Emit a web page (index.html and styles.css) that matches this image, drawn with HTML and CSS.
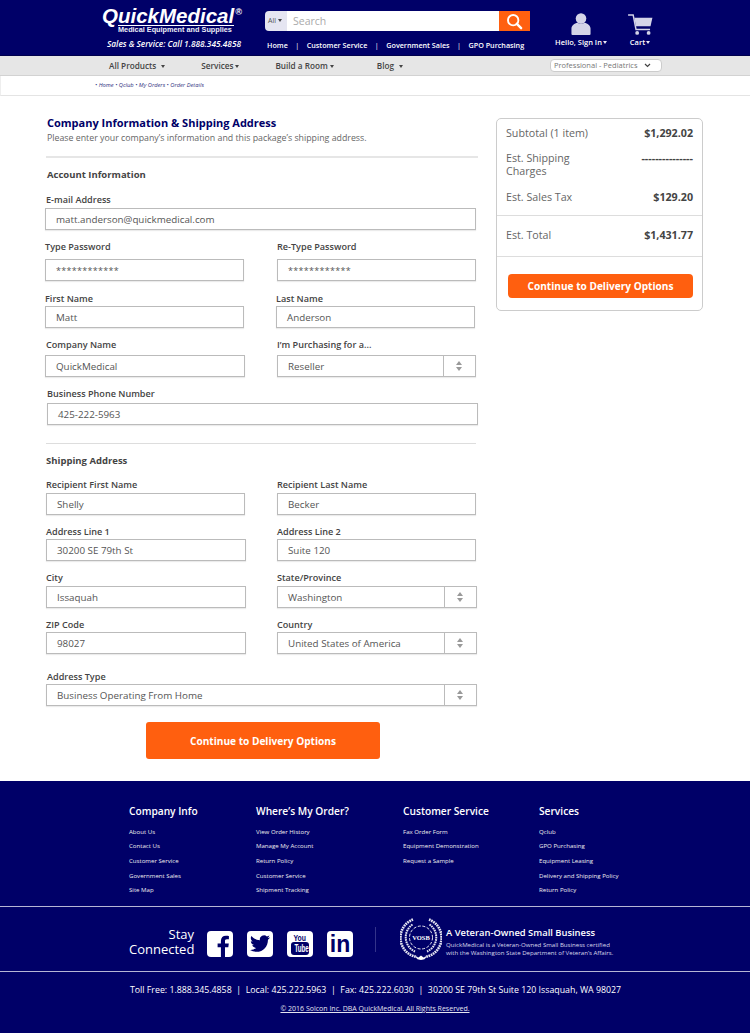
FILE: index.html
```html
<!DOCTYPE html>
<html lang="en">
<head>
<meta charset="utf-8">
<title>QuickMedical - Company Information</title>
<link rel="stylesheet" href="styles.css">
</head>
<body>
<header class="top">
  <div class="brand">
    <div class="logo"><span class="logo-name">QuickMedical</span><span class="logo-reg">®</span></div>
    <div class="logo-sub">Medical Equipment and Supplies</div>
    <div class="sales">Sales &amp; Service: Call 1.888.345.4858</div>
  </div>
  <div class="search-col">
    <div class="search">
      <div class="search-all">All<span class="caret-dark"></span></div>
      <div class="search-input">Search</div>
      <div class="search-btn">
        <svg width="17" height="17" viewBox="0 0 18 18"><circle cx="7.600" cy="7.600" r="5.500" fill="none" stroke="#fff" stroke-width="2"/><path d="M11.500 11.500 16 16" stroke="#fff" stroke-width="2.600" stroke-linecap="round"/></svg>
      </div>
    </div>
    <nav class="toplinks">
      <span>Home</span><i>|</i><span>Customer Service</span><i>|</i><span>Government Sales</span><i>|</i><span>GPO Purchasing</span>
    </nav>
  </div>
  <div class="account">
    <svg width="20" height="22" viewBox="0 0 22 24"><circle cx="11" cy="6" r="5.800" fill="#d4d4e8"/><path d="M0.500 23v-6c0-3.500 3.500-6 6.500-6.500 2.500 1.300 5.500 1.300 8 0 3 .5 6.500 3 6.500 6.500v6c0 .6-.4 1-1 1H1.500c-.6 0-1-.4-1-1z" fill="#d4d4e8"/></svg>
    <div class="acct-label">Hello, Sign In<span class="caret"></span></div>
  </div>
  <div class="cart">
    <svg width="25" height="21" viewBox="0 0 26 22"><path d="M0 1h5.300l3 15.200H23" fill="none" stroke="#d4d4e8" stroke-width="1.500"/><path d="M6.500 4H25.500l-2 8.800H8.200z" fill="#d4d4e8"/><circle cx="9.500" cy="19.800" r="2" fill="#d4d4e8"/><circle cx="21.500" cy="19.800" r="2" fill="#d4d4e8"/></svg>
    <div class="acct-label">Cart<span class="caret"></span></div>
  </div>
</header>

<nav class="mainnav">
  <span class="nav-a">All Products<span class="caret-dark wide"></span></span>
  <span class="nav-b">Services<span class="caret-dark"></span></span>
  <span class="nav-c">Build a Room<span class="caret-dark"></span></span>
  <span class="nav-d">Blog<span class="caret-dark wide"></span></span>
  <div class="pro-select">Professional - Pediatrics
    <svg width="7" height="5" viewBox="0 0 7 5"><path d="M1 1l2.500 2.500L6 1" fill="none" stroke="#444" stroke-width="1.200"/></svg>
  </div>
</nav>

<div class="crumbs">• Home • Qclub • My Orders • Order Details</div>

<main class="page">
  <form class="form">
    <h1>Company Information &amp; Shipping Address</h1>
    <p class="intro">Please enter your company’s information and this package’s shipping address.</p>
    <div class="rule rule-a"></div>
    <h2 class="h-account">Account Information</h2>

    <div class="field f-email"><label>E-mail Address</label><div class="input">matt.anderson@quickmedical.com</div></div>

    <div class="row r-pass">
      <div class="field"><label>Type Password</label><div class="input stars">************</div></div>
      <div class="field"><label>Re-Type Password</label><div class="input stars">************</div></div>
    </div>
    <div class="row r-name">
      <div class="field"><label>First Name</label><div class="input">Matt</div></div>
      <div class="field"><label>Last Name</label><div class="input">Anderson</div></div>
    </div>
    <div class="row r-company">
      <div class="field"><label>Company Name</label><div class="input">QuickMedical</div></div>
      <div class="field"><label>I’m Purchasing for a...</label><div class="input select">Reseller<span class="updown"></span></div></div>
    </div>
    <div class="field f-phone"><label>Business Phone Number</label><div class="input">425-222-5963</div></div>

    <div class="rule rule-b"></div>
    <h2 class="h-ship">Shipping Address</h2>

    <div class="row r-recip">
      <div class="field"><label>Recipient First Name</label><div class="input">Shelly</div></div>
      <div class="field"><label>Recipient Last Name</label><div class="input">Becker</div></div>
    </div>
    <div class="row r-addr">
      <div class="field"><label>Address Line 1</label><div class="input">30200 SE 79th St</div></div>
      <div class="field"><label>Address Line 2</label><div class="input">Suite 120</div></div>
    </div>
    <div class="row r-city">
      <div class="field"><label>City</label><div class="input">Issaquah</div></div>
      <div class="field"><label>State/Province</label><div class="input select">Washington<span class="updown"></span></div></div>
    </div>
    <div class="row r-zip">
      <div class="field"><label>ZIP Code</label><div class="input">98027</div></div>
      <div class="field"><label>Country</label><div class="input select">United States of America<span class="updown"></span></div></div>
    </div>
    <div class="field f-type"><label>Address Type</label><div class="input select">Business Operating From Home<span class="updown"></span></div></div>

    <button class="cta" type="button">Continue to Delivery Options</button>
  </form>

  <aside class="summary">
    <div class="sum-group">
      <div class="sum-row"><span>Subtotal (1 item)</span><b>$1,292.02</b></div>
      <div class="sum-row ship"><span>Est. Shipping<br>Charges</span><b>---------------</b></div>
      <div class="sum-row"><span>Est. Sales Tax</span><b>$129.20</b></div>
    </div>
    <div class="sum-total">
      <div class="sum-row"><span>Est. Total</span><b>$1,431.77</b></div>
    </div>
    <div class="sum-action"><button class="cta cta-small" type="button">Continue to Delivery Options</button></div>
  </aside>
</main>

<footer class="foot">
  <div class="foot-cols">
    <div class="col c1"><h3>Company Info</h3><a>About Us</a><a>Contact Us</a><a>Customer Service</a><a>Government Sales</a><a>Site Map</a></div>
    <div class="col c2"><h3>Where’s My Order?</h3><a>View Order History</a><a>Manage My Account</a><a>Return Policy</a><a>Customer Service</a><a>Shipment Tracking</a></div>
    <div class="col c3"><h3>Customer Service</h3><a>Fax Order Form</a><a>Equipment Demonstration</a><a>Request a Sample</a></div>
    <div class="col c4"><h3>Services</h3><a>Qclub</a><a>GPO Purchasing</a><a>Equipment Leasing</a><a>Delivery and Shipping Policy</a><a>Return Policy</a></div>
  </div>
  <div class="foot-mid">
    <div class="stay">Stay<br>Connected</div>
    <div class="social">
      <div class="soc"><svg width="26" height="26" viewBox="0 0 26 26"><path fill="#000068" d="M18 26V16.300h3.300l.5-3.800H18v-2.400c0-1.100.3-1.800 1.900-1.800h2V4.900c-.4 0-1.600-.2-3-.2-3 0-5 1.800-5 5.100v2.700h-3.300v3.800h3.300V26z"/></svg></div>
      <div class="soc"><svg width="20" height="17" viewBox="0 0 24 20"><path fill="#000068" d="M24 2.400c-.9.400-1.800.7-2.800.8 1-.6 1.800-1.600 2.200-2.700-1 .6-2 1-3.100 1.200A4.900 4.900 0 0 0 11.900 6.100C7.800 5.900 4.200 3.900 1.700.9.300 3.200 1 6.100 3.200 7.500c-.8 0-1.600-.2-2.200-.6 0 2.400 1.700 4.400 3.900 4.900-.7.200-1.500.2-2.200.1.600 2 2.400 3.400 4.600 3.400A9.900 9.900 0 0 1 0 17.800 14 14 0 0 0 7.500 20c9.100 0 14.300-7.700 14-14.600 1-.7 1.800-1.600 2.500-3z"/></svg></div>
      <div class="soc yt"><span class="yt-you">You</span><span class="yt-tube"><span class="yt-tube-text">Tube</span></span></div>
      <div class="soc"><span class="in">in</span></div>
    </div>
    <div class="vline"></div>
    <svg class="seal" width="42" height="42" viewBox="0 0 42 42">
      <g fill="none" stroke="#e6e6f2" stroke-dasharray="1.700 .7">
        <path stroke-width="2.600" d="M13 1.500A19.500 19.500 0 0 0 17 39"/>
        <path stroke-width="2.600" d="M29 1.500A19.500 19.500 0 0 1 25 39"/>
        <path stroke-width="2" d="M12.500 6.500A15.500 15.500 0 0 0 15 33.500"/>
        <path stroke-width="2" d="M29.500 6.500A15.500 15.500 0 0 1 27 33.500"/>
      </g>
      <circle cx="21" cy="19.500" r="11.500" fill="#000068" stroke="#fff" stroke-width=".9" stroke-dasharray="3 1.600"/>
      <text x="21" y="22" text-anchor="middle" class="seal-text">VOSB</text>
      <path d="M15.500 38.500l3 1 2.500-2 2.500 2 3-1-2 2.800-3.500.7-3.500-.7z" fill="#fff"/>
    </svg>
    <div class="vosb">
      <div class="vosb-title">A Veteran-Owned Small Business</div>
      <div class="vosb-text">QuickMedical is a Veteran-Owned Small Business certified<br>with the Washington State Department of Veteran’s Affairs.</div>
    </div>
  </div>
  <div class="foot-bottom">
    <div class="contact">Toll Free: 1.888.345.4858 &nbsp;|&nbsp; Local: 425.222.5963 &nbsp;|&nbsp; Fax: 425.222.6030 &nbsp;|&nbsp; 30200 SE 79th St Suite 120 Issaquah, WA 98027</div>
    <div class="copy">© 2016 Solcon Inc. DBA QuickMedical. All Rights Reserved.</div>
  </div>
</footer>
</body>
</html>
```
FILE: styles.css
```css
* { box-sizing: border-box; }
html, body { margin: 0; padding: 0; }
body { width: 750px; height: 1033px; overflow: hidden; background: #fff; font-family: "Open Sans", "Liberation Sans", sans-serif; color: #555; }

/* header */
.top { height: 56px; background: #000068; display: flex; color: #fff; border-bottom: 1px solid #00004d; }
.brand { width: 264px; padding-left: 102px; padding-top: 6px; }
.logo { height: 19px; line-height: 20px; white-space: nowrap; font-family: "Liberation Sans", sans-serif; font-weight: bold; font-style: italic; font-size: 0; }
.logo-name { font-size: 20.500px; }
.logo-reg { font-size: 9px; line-height: 0; vertical-align: 8px; margin-left: 1px; }
.logo-sub { font-family: "Liberation Sans", sans-serif; font-weight: bold; font-size: 7.300px; line-height: 8px; margin-left: 16px; border-top: 1px solid #fff; width: 116px; white-space: nowrap; color: #eeeef8; }
.sales { font-size: 8.300px; font-style: italic; font-weight: 600; line-height: 12px; margin-top: 4px; margin-left: 5px; white-space: nowrap; }
.search-col { width: 266px; padding-top: 11px; }
.search { display: flex; height: 20px; width: 265px; margin-left: 1px; }
.search-all { width: 22px; background: #e5e5f1; border-radius: 4px 0 0 4px; color: #555; font-size: 7px; line-height: 20px; padding-left: 3px; white-space: nowrap; }
.search-input { flex: 1; background: #fff; color: #aaa; font-size: 10.500px; line-height: 20px; padding-left: 6px; }
.search-btn { width: 31px; background: #ff6010; display: flex; align-items: center; justify-content: center; }
.toplinks { margin-top: 8px; margin-left: 3px; font-size: 7.200px; font-weight: 600; line-height: 12px; white-space: nowrap; display: flex; }
.toplinks i { font-style: normal; font-weight: 400; margin: 0 7.500px; }
.account { width: 62px; margin-left: 20px; padding-top: 13px; text-align: center; }
.cart { width: 50px; margin-left: 3px; padding-top: 14px; text-align: center; }
.account svg, .cart svg { display: block; margin: 0 auto; }
.acct-label { font-size: 7.500px; font-weight: 600; line-height: 12px; margin-top: 1px; white-space: nowrap; }
.caret, .caret-dark { display: inline-block; width: 0; height: 0; border-left: 2.500px solid transparent; border-right: 2.500px solid transparent; border-top: 3px solid #e8e8f5; margin-left: 1px; vertical-align: 1px; }
.caret-dark { border-top-color: #444; margin-left: 2px; }
.caret-dark.wide { margin-left: 5px; }

/* main nav */
.mainnav { height: 20px; background: #e6e6e6; border-bottom: 1px solid #d2d2d2; display: flex; align-items: center; font-size: 8.200px; font-weight: 600; color: #444; white-space: nowrap; }
.nav-a { margin-left: 109px; }
.nav-b { margin-left: 36px; }
.nav-c { margin-left: 36px; }
.nav-d { margin-left: 43px; }
.pro-select { margin-left: 147px; width: 112px; height: 13px; background: #fff; border: 1px solid #ccc; border-radius: 4px; color: #777; font-size: 7.500px; font-weight: 400; line-height: 11px; padding-left: 3px; display: flex; align-items: center; justify-content: space-between; padding-right: 10px; }

.crumbs { height: 20px; border-bottom: 1px solid #e4e4e4; border-left: 1px solid #eee; padding-left: 94px; font-size: 5.750px; font-style: italic; line-height: 18px; color: #33337f; white-space: nowrap; }

/* layout */
.page { display: flex; height: 685px; }
.form { width: 496px; padding-left: 45px; padding-top: 20px; }
h1 { margin: 0 0 0 2px; font-size: 11px; line-height: 14px; font-weight: 700; color: #000068; white-space: nowrap; }
.intro { margin: 1px 0 0 2px; font-size: 8.800px; line-height: 14px; color: #666; white-space: nowrap; }
.rule { background: #ddd; }
.rule-a { width: 432px; height: 2px; background: #e6e6e6; margin: 11px 0 0 1px; }
.rule-b { width: 430px; height: 1px; margin: 18px 0 0 1px; }
h2 { margin: 0; font-size: 9.500px; line-height: 14px; font-weight: 700; color: #444; white-space: nowrap; }
.h-account { margin: 10px 0 0 2px; }
.h-ship { margin: 10px 0 0 1px; }

.row { display: flex; }
.row .field { width: 199px; }
.row .field + .field { margin-left: 32px; }
label { display: block; height: 14px; line-height: 15px; margin-bottom: 1px; font-size: 9.100px; font-weight: 600; color: #444; white-space: nowrap; }
.input { position: relative; height: 22px; border: 1px solid #bbb; box-shadow: 0 1px 1px rgba(0,0,0,.08); background: #fff; padding: 1px 0 0 10px; font-size: 9.800px; line-height: 20px; color: #555; white-space: nowrap; }
.stars { font-size: 9px; letter-spacing: .3px; }
.select { padding-right: 32px; }
.updown { position: absolute; top: 0; right: 0; width: 32px; height: 20px; border-left: 1px solid #bbb; }
.updown::before, .updown::after { content: ""; position: absolute; left: 12px; width: 0; height: 0; border-left: 3px solid transparent; border-right: 3px solid transparent; }
.updown::before { top: 5px; border-bottom: 4px solid #999; }
.updown::after { top: 11px; border-top: 4px solid #999; }

.f-email { margin-top: 10px; width: 431px; }
.f-email label { margin-bottom: 2px; margin-left: 1px; }
.r-pass { margin-top: 9px; }
.r-pass label { margin-bottom: 6px; }
.r-pass .field + .field { margin-left: 33px; }
.r-name { margin-top: 10px; }
.r-company { margin-top: 9px; }
.r-company label { margin-bottom: 4px; }
.r-company .field:first-child label { margin-left: 1px; }
.r-company .field { width: 200px; }
.r-company .field + .field { margin-left: 32px; width: 199px; }
.f-phone { margin: 9px 0 0 2px; width: 431px; }
.f-phone label { margin-bottom: 3px; }
.r-recip, .r-addr, .r-city, .r-zip { margin-left: 1px; }
.r-recip { margin-top: 9px; }
.r-recip label { margin-bottom: 2px; }
.r-addr { margin-top: 9px; }
.r-addr .field:first-child, .r-city .field:first-child, .r-zip .field:first-child { width: 200px; }
.r-addr .field + .field { margin-left: 31px; }
.r-city { margin-top: 9px; }
.r-city label { margin-bottom: 2px; }
.r-city .field + .field, .r-zip .field + .field { margin-left: 31px; width: 200px; }
.r-zip { margin-top: 9px; }
.f-type { margin: 15px 0 0 1px; width: 431px; }
.f-type label { margin-left: 1px; }

.cta { display: block; margin: 16px 0 0 101px; width: 234px; height: 37px; border: 0; border-radius: 3px; background: #ff5f0f; color: #fff; font-family: "Open Sans", "Liberation Sans", sans-serif; font-size: 10.100px; font-weight: 700; cursor: pointer; }
.cta-small { margin: 0; width: 185px; height: 24px; border-radius: 4px; }

/* summary */
.summary { width: 207px; height: 193px; margin-top: 22px; border: 1px solid #ccc; border-radius: 5px; font-size: 10.700px; color: #666; }
.sum-group { padding: 1px 9px 4px 9px; height: 97px; border-bottom: 1px solid #ddd; }
.sum-total { padding: 6px 9px 0; height: 41px; border-bottom: 1px solid #ddd; }
.sum-row { display: flex; justify-content: space-between; align-items: baseline; line-height: 13px; padding: 7px 0; }
.sum-row.ship { padding: 5px 0 6px; }
.sum-row b { color: #444; font-weight: 700; }
.sum-row.ship span { display: block; }
.sum-action { padding: 17px 11px 0; }

/* footer */
.foot { height: 252px; background: #000068; color: #fff; }
.foot-cols { height: 126px; display: flex; padding-left: 129px; padding-top: 22px; border-bottom: 1px solid #b5b5d5; }
.col { display: flex; flex-direction: column; }
.c1 { width: 127px; }
.c2 { width: 147px; }
.c3 { width: 136px; }
h3 { margin: 0 0 5.500px; font-size: 10.200px; line-height: 16px; font-weight: 600; white-space: nowrap; }
.col a { font-size: 6.100px; line-height: 14.700px; color: #eee; white-space: nowrap; }
.foot-mid { height: 65px; display: flex; align-items: center; border-bottom: 1px solid #b5b5d5; padding-left: 129px; padding-top: 9px; }
.stay { width: 65px; font-size: 13px; line-height: 15px; text-align: right; margin-bottom: 4px; white-space: nowrap; }
.social { display: flex; gap: 14px; margin-left: 13px; }
.soc { width: 26px; height: 26px; border-radius: 4px; background: #fff; color: #000068; display: flex; align-items: center; justify-content: center; overflow: hidden; }
.yt { flex-direction: column; font-family: "Liberation Sans", sans-serif; font-weight: 700; }
.yt-you { font-size: 9.500px; line-height: 9px; transform: scaleX(.72); }
.yt-tube { width: 18px; height: 13px; background: #000068; color: #fff; border-radius: 3px; text-align: center; }
.yt-tube-text { display: block; font-size: 10px; line-height: 13px; transform: scaleX(.62); }
.in { font-family: "Liberation Sans", sans-serif; font-weight: 700; font-size: 23px; line-height: 26px; }
.vline { width: 1px; height: 25px; background: #33338a; margin-left: 22px; margin-bottom: 9px; }
.seal { margin-left: 24px; margin-bottom: 9px; }
.seal-text { font-family: "Liberation Serif", serif; font-weight: 700; font-size: 6.500px; fill: #fff; }
.vosb { margin-left: 4px; white-space: nowrap; margin-bottom: 5px; }
.vosb-title { font-size: 9.400px; font-weight: 600; line-height: 13px; }
.vosb-text { font-size: 6.100px; line-height: 8px; color: #d8d8ea; margin-top: 2px; }
.foot-bottom { text-align: center; padding-top: 10px; }
.contact { font-size: 8.800px; line-height: 16px; white-space: nowrap; padding-left: 1px; }
.copy { font-size: 7px; line-height: 10px; margin-top: 6px; text-decoration: underline; color: #e4e4f0; }
```
